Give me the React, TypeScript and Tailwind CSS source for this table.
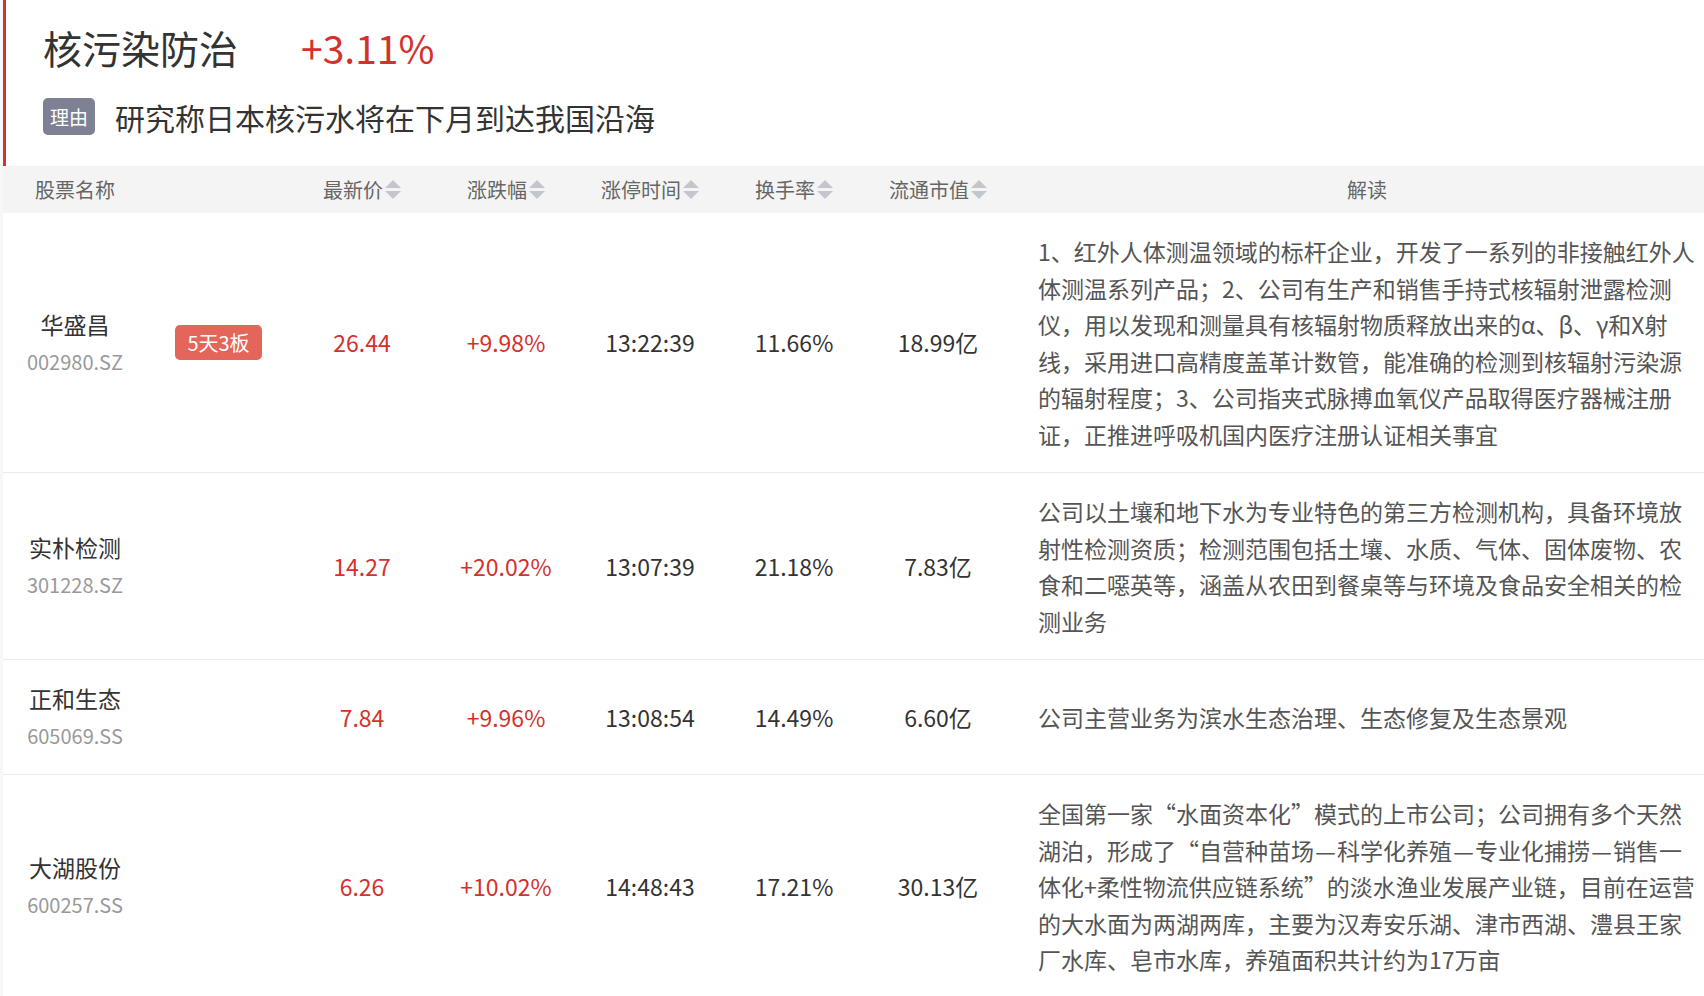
import React from "react";

type Row = {
  name: string;
  code: string;
  badge?: string;
  price: string;
  change: string;
  time: string;
  turnover: string;
  cap: string;
  desc: React.ReactNode;
};

function Dash() {
  return <span className="inline-block w-[1em] text-center">—</span>;
}

const rows: Row[] = [
  {
    name: "华盛昌",
    code: "002980.SZ",
    badge: "5天3板",
    price: "26.44",
    change: "+9.98%",
    time: "13:22:39",
    turnover: "11.66%",
    cap: "18.99亿",
    desc: "1、红外人体测温领域的标杆企业，开发了一系列的非接触红外人体测温系列产品；2、公司有生产和销售手持式核辐射泄露检测仪，用以发现和测量具有核辐射物质释放出来的α、β、γ和X射线，采用进口高精度盖革计数管，能准确的检测到核辐射污染源的辐射程度；3、公司指夹式脉搏血氧仪产品取得医疗器械注册证，正推进呼吸机国内医疗注册认证相关事宜",
  },
  {
    name: "实朴检测",
    code: "301228.SZ",
    price: "14.27",
    change: "+20.02%",
    time: "13:07:39",
    turnover: "21.18%",
    cap: "7.83亿",
    desc: "公司以土壤和地下水为专业特色的第三方检测机构，具备环境放射性检测资质；检测范围包括土壤、水质、气体、固体废物、农食和二噁英等，涵盖从农田到餐桌等与环境及食品安全相关的检测业务",
  },
  {
    name: "正和生态",
    code: "605069.SS",
    price: "7.84",
    change: "+9.96%",
    time: "13:08:54",
    turnover: "14.49%",
    cap: "6.60亿",
    desc: "公司主营业务为滨水生态治理、生态修复及生态景观",
  },
  {
    name: "大湖股份",
    code: "600257.SS",
    price: "6.26",
    change: "+10.02%",
    time: "14:48:43",
    turnover: "17.21%",
    cap: "30.13亿",
    desc: (
      <>
        全国第一家“水面资本化”模式的上市公司；公司拥有多个天然湖泊，形成了“自营种苗场
        <Dash />
        科学化养殖
        <Dash />
        专业化捕捞
        <Dash />
        销售一体化+柔性物流供应链系统”的淡水渔业发展产业链，目前在运营的大水面为两湖两库，主要为汉寿安乐湖、津市西湖、澧县王家厂水库、皂市水库，养殖面积共计约为17万亩
      </>
    ),
  },
];

function SortIcon() {
  return (
    <span className="ml-[2px] inline-flex flex-col items-center gap-[3px]">
      <span className="block h-0 w-0 border-x-[8px] border-b-[8px] border-x-transparent border-b-[#c3c6cd]" />
      <span className="block h-0 w-0 border-x-[8px] border-t-[8px] border-x-transparent border-t-[#c3c6cd]" />
    </span>
  );
}

function HeadCell({ label }: { label: string }) {
  return (
    <div className="flex items-center justify-center">
      <span>{label}</span>
      <SortIcon />
    </div>
  );
}

export default function App() {
  return (
    <div className="min-h-screen w-full bg-[#f6f7f9] pl-[3px] font-['Noto_Sans_CJK_SC','Noto_Sans',sans-serif]">
      <div className="bg-white">
        <div className="h-[166px] border-l-[3px] border-[#d5312c] pl-[37px] pt-[24px]">
          <div className="flex h-[46px] items-center">
            <span className="text-[39px] leading-none text-[#333]">核污染防治</span>
            <span className="ml-[63px] text-[39px] leading-none text-[#d5312c]">+3.11%</span>
          </div>
          <div className="mt-[28px] flex h-[37px] items-center">
            <span className="flex h-[37px] w-[52px] items-center justify-center rounded-[5px] bg-[#7d8193] text-[19px] leading-none text-white">
              理由
            </span>
            <span className="ml-[20px] text-[30px] leading-none text-[#333]">
              研究称日本核污水将在下月到达我国沿海
            </span>
          </div>
        </div>

        <div className="grid h-[47px] grid-cols-[287px_144px_144px_144px_144px_144px_1fr] items-center bg-[#f4f4f4] text-[20px] leading-none text-[#666]">
          <div className="pl-[32px]">股票名称</div>
          <HeadCell label="最新价" />
          <HeadCell label="涨跌幅" />
          <HeadCell label="涨停时间" />
          <HeadCell label="换手率" />
          <HeadCell label="流通市值" />
          <div className="pl-[28px] pr-[8px] text-center">解读</div>
        </div>

        {rows.map((r) => (
          <div
            key={r.code}
            className="grid grid-cols-[287px_144px_144px_144px_144px_144px_1fr] items-center border-b border-[#ebebeb] text-[23px]"
          >
            <div className="flex items-center py-[20px]">
              <div className="ml-[20px] w-[104px] text-center">
                <div className="leading-[37px] text-[#333]">{r.name}</div>
                <div className="text-[20px] leading-[37px] text-[#999]">{r.code}</div>
              </div>
              {r.badge && (
                <span className="ml-[48px] flex h-[35px] w-[87px] items-center justify-center rounded-[5px] bg-[#e4655a] text-[20px] leading-none text-white">
                  {r.badge}
                </span>
              )}
            </div>
            <div className="text-center text-[#d5312c]">{r.price}</div>
            <div className="text-center text-[#d5312c]">{r.change}</div>
            <div className="text-center text-[#333]">{r.time}</div>
            <div className="text-center text-[#333]">{r.turnover}</div>
            <div className="text-center text-[#333]">{r.cap}</div>
            <div className="py-[20px] pl-[28px] pr-[5px] text-[23px] leading-[36.5px] text-[#555]">
              {r.desc}
            </div>
          </div>
        ))}
      </div>
    </div>
  );
}
